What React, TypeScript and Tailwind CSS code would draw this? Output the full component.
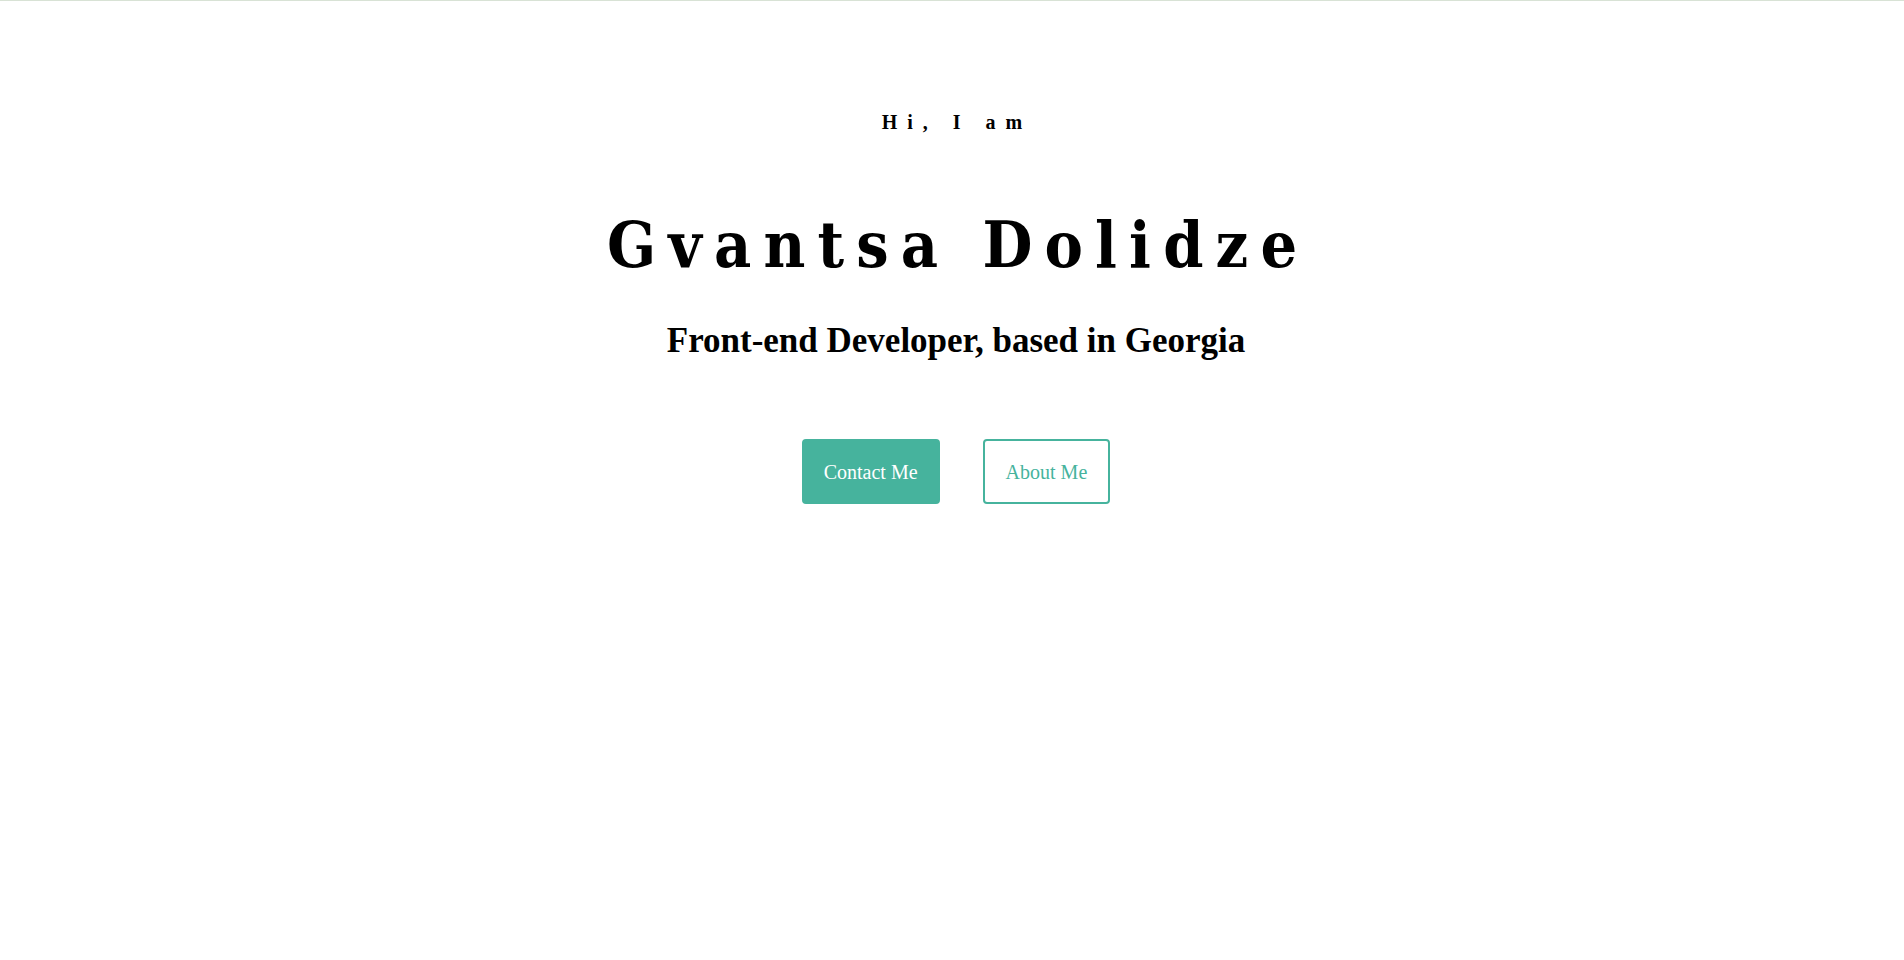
export default function App() {
  return (
    <div className="min-h-screen bg-white border-t border-[#d8e2d5]">
      <section className="flex flex-col items-center pt-[109px] text-black">
        <p className="font-['Liberation_Serif',serif] text-[20px] font-bold tracking-[0.5em] leading-6 pl-[0.5em]">
          Hi, I am
        </p>
        <h1 className="mt-[71px] font-['DejaVu_Serif_Condensed','DejaVu_Serif',serif] text-[64px] font-bold tracking-[0.19em] leading-[80px] pl-[0.19em]">
          Gvantsa Dolidze
        </h1>
        <h2 className="mt-[36px] pl-[8px] font-['Liberation_Serif',serif] text-[35px] font-bold leading-10">
          Front-end Developer, based in Georgia
        </h2>
        <div className="mt-[78px] pl-[8px] flex gap-[43px] font-['Liberation_Serif',serif] text-[20px]">
          <button className="h-[65px] px-[20px] rounded-[4px] border-2 border-[#46b39d] bg-[#46b39d] text-white">
            Contact Me
          </button>
          <button className="h-[65px] px-[21px] rounded-[4px] border-2 border-[#46b39d] bg-white text-[#46b39d]">
            About Me
          </button>
        </div>
      </section>
    </div>
  );
}
